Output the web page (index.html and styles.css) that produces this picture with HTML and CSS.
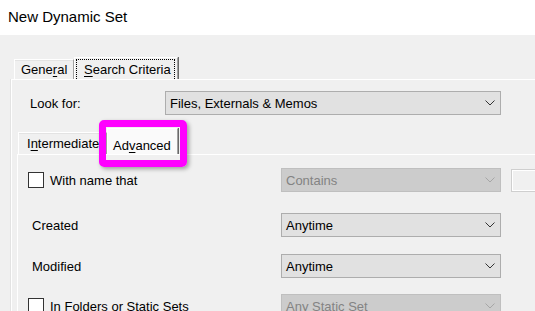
FILE: index.html
```html
<!DOCTYPE html>
<html lang="en">
<head>
  <meta charset="UTF-8" />
  <title>New Dynamic Set</title>
  <link rel="stylesheet" href="styles.css">
</head>
<body>
  <div class="titlebar">New Dynamic Set</div>

  <div class="dialog">
    <div class="tabs">
      <div class="tab">Gene<u>r</u>al</div>
      <div class="tab active"><span class="focus"><u>S</u>earch Criteria</span></div>
    </div>

    <div class="panel">
      <div class="lookfor">
        <span class="label">Look for:</span>
        <div class="combo wide">
          <span>Files, Externals &amp; Memos</span>
          <svg viewBox="0 0 10 6"><polyline points="0.5,0.5 5,5 9.5,0.5" /></svg>
        </div>
      </div>

      <div class="subtabs">
        <div class="tab">I<u>n</u>termediate</div>
        <div class="tab active marked">Ad<u>v</u>anced</div>
      </div>

      <div class="subpanel">
        <div class="row first">
          <div class="cell">
            <span class="check"></span>
            <span>With name that</span>
          </div>
          <div class="combo disabled">
            <span>Contains</span>
            <svg viewBox="0 0 10 6"><polyline points="0.5,0.5 5,5 9.5,0.5" /></svg>
          </div>
          <div class="edit"></div>
        </div>

        <div class="row second">
          <div class="cell plain">Created</div>
          <div class="combo">
            <span>Anytime</span>
            <svg viewBox="0 0 10 6"><polyline points="0.5,0.5 5,5 9.5,0.5" /></svg>
          </div>
        </div>

        <div class="row">
          <div class="cell plain">Modified</div>
          <div class="combo">
            <span>Anytime</span>
            <svg viewBox="0 0 10 6"><polyline points="0.5,0.5 5,5 9.5,0.5" /></svg>
          </div>
        </div>

        <div class="row">
          <div class="cell">
            <span class="check"></span>
            <span>In Folders or Static Sets</span>
          </div>
          <div class="combo disabled">
            <span>Any Static Set</span>
            <svg viewBox="0 0 10 6"><polyline points="0.5,0.5 5,5 9.5,0.5" /></svg>
          </div>
        </div>
      </div>
    </div>
  </div>
</body>
</html>
```

FILE: styles.css
```css
body {
  margin: 0;
  background: #f0f0f0;
  font-family: 'Liberation Sans', Arial, sans-serif;
  font-size: 13px;
  color: #000;
  overflow: hidden;
}

u {
  text-decoration-thickness: 1px;
  text-underline-offset: 2px;
}

.titlebar {
  height: 35px;
  line-height: 34px;
  padding-left: 8px;
  background: #fff;
  font-size: 15px;
}

.dialog {
  padding: 22px 0 0 11px;
}

/* Tabs */
.tabs,
.subtabs {
  display: flex;
  align-items: flex-end;
}

.tabs {
  height: 22px;
  padding-left: 3px;
}

.tab {
  box-sizing: border-box;
  height: 20px;
  line-height: 19px;
  padding: 0 6px;
  border-top: 1px solid #fff;
  border-left: 1px solid #fff;
  border-right: 1px solid #a0a0a0;
  box-shadow: inset 0 1px 0 #e3e3e3;
  white-space: nowrap;
}

.tabs .tab {
  width: 60px;
}

.tabs .tab.active {
  width: 104px;
  height: 22px;
  padding: 1px 2px 0 1px;
  box-shadow: 1px 0 0 #696969;
}

.focus {
  display: block;
  height: 20px;
  line-height: 19px;
  padding-left: 7px;
  border: 1px dotted #000;
  border-bottom: 0;
  box-sizing: border-box;
}

/* Main panel */
.panel {
  width: 600px;
  height: 260px;
  border-top: 1px solid #fff;
  border-left: 1px solid #fff;
  box-shadow: -1px 0 0 #e3e3e3;
  padding-top: 11px;
}

.lookfor {
  display: flex;
  align-items: center;
  height: 24px;
  padding-left: 18px;
}

.lookfor .label {
  width: 135px;
}

/* Combo boxes */
.combo {
  box-sizing: border-box;
  display: flex;
  align-items: center;
  justify-content: space-between;
  width: 220px;
  height: 24px;
  padding: 0 5px 0 4px;
  background: #e1e1e1;
  border: 1px solid #adadad;
}

.combo.wide {
  width: 336px;
}

.combo svg {
  width: 10px;
  height: 6px;
  fill: none;
  stroke: #333;
  stroke-width: 1;
}

.combo.disabled {
  background: #cccccc;
  border-color: #bfbfbf;
  color: #838383;
}

.combo.disabled svg {
  stroke: #a6a6a6;
}

/* Inner tabs */
.subtabs {
  height: 26px;
  margin-top: 13px;
  padding-left: 6px;
}

.subtabs .tab {
  height: 22px;
  line-height: 21px;
  width: 89px;
  padding-left: 8px;
}

.subtabs .tab.active {
  position: relative;
  width: 71px;
  height: 26px;
  line-height: 28px;
  padding: 3px 0 0 5px;
  background: #fafafa;
  box-shadow: 1px 0 0 #696969;
}

.marked::after {
  content: "";
  position: absolute;
  left: -9px;
  top: -9px;
  right: -10px;
  bottom: -13px;
  border: 7px solid #ff00ff;
  border-radius: 5px;
  box-shadow: 2px 2px 4px rgba(0, 0, 0, 0.35);
}

/* Inner panel */
.subpanel {
  margin-left: 5px;
  height: 200px;
  border-top: 1px solid #fff;
  border-left: 1px solid #fff;
  padding-top: 13px;
}

.row {
  display: flex;
  align-items: center;
  height: 24px;
  margin-bottom: 16px;
}

.row.first {
  margin-bottom: 21px;
}

.row.second {
  margin-bottom: 17px;
}

.cell {
  display: flex;
  align-items: center;
  gap: 6px;
  width: 253px;
  padding-left: 10px;
}

.cell.plain {
  width: 249px;
  padding-left: 14px;
}

.check {
  box-sizing: border-box;
  width: 16px;
  height: 16px;
  background: #fff;
  border: 1px solid #333;
}

.edit {
  box-sizing: border-box;
  width: 60px;
  height: 23px;
  margin-left: 10px;
  background: #f0f0f0;
  border: 1px solid #cfcfcf;
  box-shadow: inset 0 0 0 1px #fff;
}
```
